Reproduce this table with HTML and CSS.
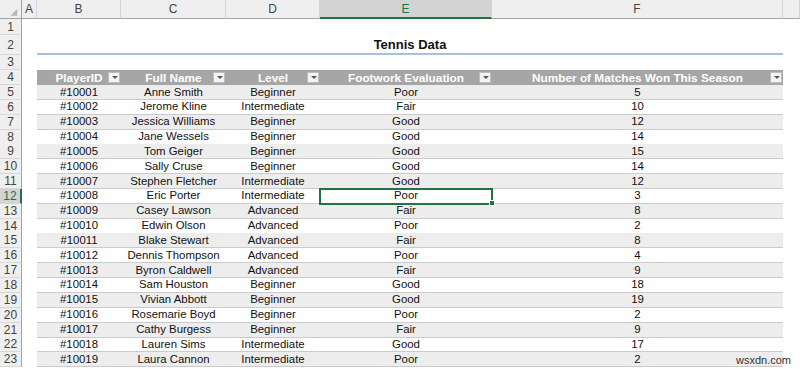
FILE: index.html
```html
<!DOCTYPE html>
<html lang="en">
<head>
    <meta charset="UTF-8">
    <meta name="viewport" content="width=device-width, initial-scale=1.0">
    <title>Tennis Data</title>
    <link rel="stylesheet" href="styles.css">
</head>
<body>
<div class="sheet">
    <!-- column letters -->
    <div class="row colhead">
        <div class="corner">
            <svg width="22" height="18" viewBox="0 0 22 18"><polygon points="11,16 18,16 18,9" fill="#b7b7b7"/></svg>
        </div>
        <div>A</div>
        <div>B</div>
        <div>C</div>
        <div>D</div>
        <div class="active">E</div>
        <div>F</div>
        <div></div>
    </div>

    <div class="row r1">
        <div class="num">1</div>
    </div>
    <div class="row r2">
        <div class="num">2</div>
        <div></div>
        <div class="title">Tennis Data</div>
    </div>
    <div class="row r3">
        <div class="num">3</div>
    </div>

    <!-- table header -->
    <div class="row r4">
        <div class="num">4</div>
        <div></div>
        <div class="th">PlayerID<span class="filter"></span></div>
        <div class="th">Full Name<span class="filter"></span></div>
        <div class="th">Level<span class="filter"></span></div>
        <div class="th">Footwork Evaluation<span class="filter"></span></div>
        <div class="th">Number of Matches Won This Season<span class="filter"></span></div>
    </div>

    <div class="row rd band">
        <div class="num">5</div><div></div>
        <div class="td">#10001</div><div class="td">Anne Smith</div><div class="td">Beginner</div><div class="td">Poor</div><div class="td">5</div>
    </div>
    <div class="row rd">
        <div class="num">6</div><div></div>
        <div class="td">#10002</div><div class="td">Jerome Kline</div><div class="td">Intermediate</div><div class="td">Fair</div><div class="td">10</div>
    </div>
    <div class="row rd band">
        <div class="num">7</div><div></div>
        <div class="td">#10003</div><div class="td">Jessica Williams</div><div class="td">Beginner</div><div class="td">Good</div><div class="td">12</div>
    </div>
    <div class="row rd">
        <div class="num">8</div><div></div>
        <div class="td">#10004</div><div class="td">Jane Wessels</div><div class="td">Beginner</div><div class="td">Good</div><div class="td">14</div>
    </div>
    <div class="row rd band">
        <div class="num">9</div><div></div>
        <div class="td">#10005</div><div class="td">Tom Geiger</div><div class="td">Beginner</div><div class="td">Good</div><div class="td">15</div>
    </div>
    <div class="row rd">
        <div class="num">10</div><div></div>
        <div class="td">#10006</div><div class="td">Sally Cruse</div><div class="td">Beginner</div><div class="td">Good</div><div class="td">14</div>
    </div>
    <div class="row rd band">
        <div class="num">11</div><div></div>
        <div class="td">#10007</div><div class="td">Stephen Fletcher</div><div class="td">Intermediate</div><div class="td">Good</div><div class="td">12</div>
    </div>
    <div class="row rd">
        <div class="num active">12</div><div></div>
        <div class="td">#10008</div><div class="td">Eric Porter</div><div class="td">Intermediate</div><div class="td sel">Poor</div><div class="td">3</div>
    </div>
    <div class="row rd band">
        <div class="num">13</div><div></div>
        <div class="td">#10009</div><div class="td">Casey Lawson</div><div class="td">Advanced</div><div class="td">Fair</div><div class="td">8</div>
    </div>
    <div class="row rd">
        <div class="num">14</div><div></div>
        <div class="td">#10010</div><div class="td">Edwin Olson</div><div class="td">Advanced</div><div class="td">Poor</div><div class="td">2</div>
    </div>
    <div class="row rd band">
        <div class="num">15</div><div></div>
        <div class="td">#10011</div><div class="td">Blake Stewart</div><div class="td">Advanced</div><div class="td">Fair</div><div class="td">8</div>
    </div>
    <div class="row rd">
        <div class="num">16</div><div></div>
        <div class="td">#10012</div><div class="td">Dennis Thompson</div><div class="td">Advanced</div><div class="td">Poor</div><div class="td">4</div>
    </div>
    <div class="row rd band">
        <div class="num">17</div><div></div>
        <div class="td">#10013</div><div class="td">Byron Caldwell</div><div class="td">Advanced</div><div class="td">Fair</div><div class="td">9</div>
    </div>
    <div class="row rd">
        <div class="num">18</div><div></div>
        <div class="td">#10014</div><div class="td">Sam Houston</div><div class="td">Beginner</div><div class="td">Good</div><div class="td">18</div>
    </div>
    <div class="row rd band">
        <div class="num">19</div><div></div>
        <div class="td">#10015</div><div class="td">Vivian Abbott</div><div class="td">Beginner</div><div class="td">Good</div><div class="td">19</div>
    </div>
    <div class="row rd">
        <div class="num">20</div><div></div>
        <div class="td">#10016</div><div class="td">Rosemarie Boyd</div><div class="td">Beginner</div><div class="td">Poor</div><div class="td">2</div>
    </div>
    <div class="row rd band">
        <div class="num">21</div><div></div>
        <div class="td">#10017</div><div class="td">Cathy Burgess</div><div class="td">Beginner</div><div class="td">Fair</div><div class="td">9</div>
    </div>
    <div class="row rd">
        <div class="num">22</div><div></div>
        <div class="td">#10018</div><div class="td">Lauren Sims</div><div class="td">Intermediate</div><div class="td">Good</div><div class="td">17</div>
    </div>
    <div class="row rd band">
        <div class="num">23</div><div></div>
        <div class="td">#10019</div><div class="td">Laura Cannon</div><div class="td">Intermediate</div><div class="td">Poor</div><div class="td">2</div>
    </div>

    <div class="watermark">wsxdn.com</div>
</div>
</body>
</html>
```

FILE: styles.css
```css
body {
    margin: 0;
    padding: 0;
    background: #fff;
    overflow: hidden;
}
.sheet {
    position: relative;
    font-family: "Liberation Sans", Arial, sans-serif;
    font-size: 11.4px;
    color: #111;
    height: 369px;
}
.row {
    display: grid;
    grid-template-columns: 22px 15px 84px 105px 94px 172px 291px 1fr;
}
.row > div {
    box-sizing: border-box;
    display: flex;
    align-items: center;
    justify-content: center;
    white-space: nowrap;
}

/* column letters */
.colhead {
    height: 19px;
}
.colhead > div {
    background: #efefef;
    border-right: 1px solid #d5d5d5;
    border-bottom: 1px solid #a3a3a3;
    font-size: 12px;
    color: #444;
}
.colhead > .corner {
    border-right: 1px solid #a3a3a3;
}
.colhead > .active {
    background: #d3d3d3;
    color: #217346;
    border-bottom: 2px solid #217346;
}

/* row numbers */
.num {
    background: #efefef;
    border-right: 1px solid #a3a3a3;
    border-bottom: 1px solid #d8d8d8;
    font-size: 12px;
    color: #444;
}
.num.active {
    background: #d3d3d3;
    color: #217346;
    border-right: 2px solid #217346;
}

.r1 { height: 16px; }
.r2 { height: 20px; }
.r3 { height: 15px; }
.r4 { height: 15px; }
.rd { height: 14.85px; }

.title {
    grid-column: 3 / 8;
    font-size: 13px;
    font-weight: bold;
    border-bottom: 2px solid #a8c0dd;
}

/* table */
.th {
    position: relative;
    background: #a6a6a6;
    color: #fff;
    font-weight: bold;
    font-size: 11.8px;
}
.filter {
    position: absolute;
    right: 1px;
    top: 2px;
    width: 12px;
    height: 11px;
    box-sizing: border-box;
    background: #f4f4f4;
    border: 1px solid #bdbdbd;
}
.filter::after {
    content: "";
    position: absolute;
    left: 3px;
    top: 3px;
    border-left: 3px solid transparent;
    border-right: 3px solid transparent;
    border-top: 3px solid #555;
}
.td {
    border-bottom: 1px solid #cbcbcb;
    line-height: 13px;
}
.band .td {
    background: #ededed;
}
.sel {
    position: relative;
    z-index: 1;
    outline: 2px solid #217346;
    outline-offset: -1px;
}
.sel::after {
    content: "";
    position: absolute;
    right: -3px;
    bottom: -3px;
    width: 4px;
    height: 4px;
    background: #217346;
    border: 1px solid #fff;
}

.watermark {
    position: absolute;
    right: 9px;
    bottom: 3px;
    font-size: 11px;
    color: #333;
}
```
